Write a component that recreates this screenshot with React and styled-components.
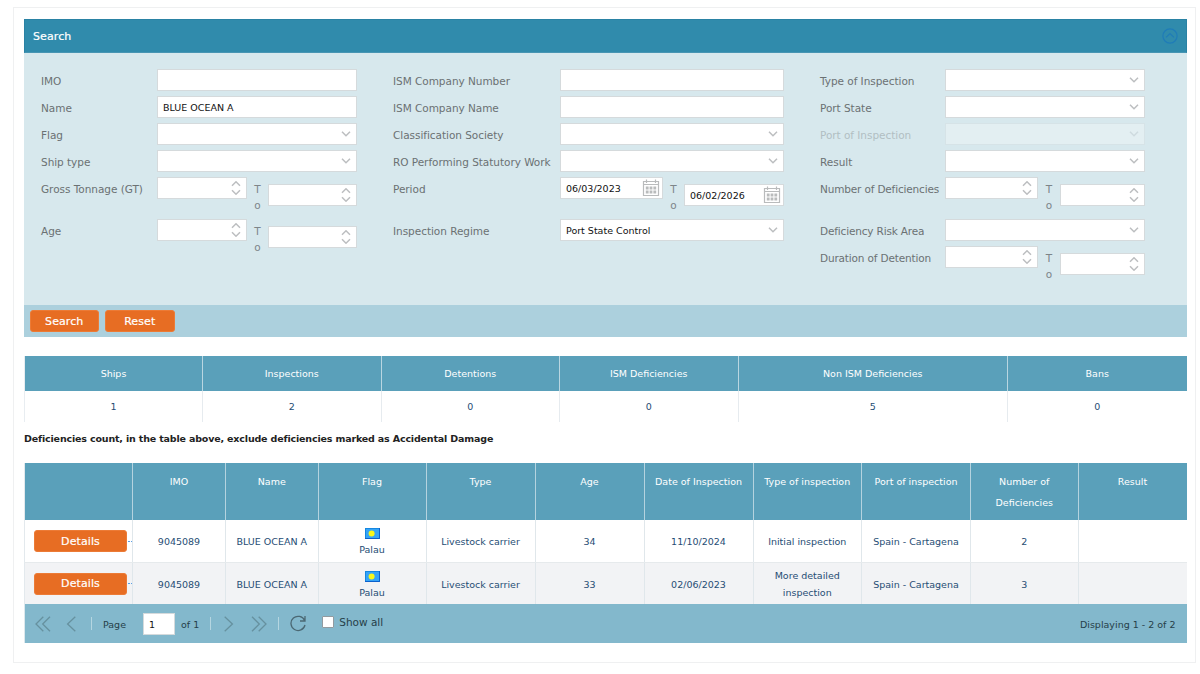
import React from 'react'
import styled, { createGlobalStyle } from 'styled-components'

const filters = [
    {
        labelWidth: 116,
        fieldWidth: 200,
        rows: [
            { label: 'IMO' },
            { label: 'Name', value: 'BLUE OCEAN A' },
            { label: 'Flag', type: 'select' },
            { label: 'Ship type', type: 'select' },
            { label: 'Gross Tonnage (GT)', type: 'range', from: 90, to: 89 },
            { label: 'Age', type: 'range', from: 90, to: 89 },
        ],
    },
    {
        labelWidth: 167,
        fieldWidth: 224,
        rows: [
            { label: 'ISM Company Number' },
            { label: 'ISM Company Name' },
            { label: 'Classification Society', type: 'select' },
            { label: 'RO Performing Statutory Work', type: 'select' },
            { label: 'Period', type: 'dates', from: 103, to: 100, values: ['06/03/2023', '06/02/2026'] },
            { label: 'Inspection Regime', type: 'select', value: 'Port State Control' },
        ],
    },
    {
        labelWidth: 125,
        fieldWidth: 200,
        rows: [
            { label: 'Type of Inspection', type: 'select' },
            { label: 'Port State', type: 'select' },
            { label: 'Port of Inspection', type: 'select', disabled: true },
            { label: 'Result', type: 'select' },
            { label: 'Number of Deficiencies', type: 'range', from: 93, to: 85, tight: true },
            { label: 'Deficiency Risk Area', type: 'select', tight: true },
            { label: 'Duration of Detention', type: 'range', from: 93, to: 85, tight: true },
        ],
    },
]

const totals = [
    ['Ships', 1],
    ['Inspections', 2],
    ['Detentions', 0],
    ['ISM Deficiencies', 0],
    ['Non ISM Deficiencies', 5],
    ['Bans', 0],
]

const headings = ['', 'IMO', 'Name', 'Flag', 'Type', 'Age', 'Date of Inspection', 'Type of inspection', 'Port of inspection', 'Number of Deficiencies', 'Result']

const inspections = [
    { imo: '9045089', name: 'BLUE OCEAN A', flag: 'Palau', type: 'Livestock carrier', age: 34, date: '11/10/2024', kind: 'Initial inspection', port: 'Spain - Cartagena', count: 2 },
    { imo: '9045089', name: 'BLUE OCEAN A', flag: 'Palau', type: 'Livestock carrier', age: 33, date: '02/06/2023', kind: 'More detailed inspection', port: 'Spain - Cartagena', count: 3 },
]

const Chevron = () => (
    <svg width="10" height="6" viewBox="0 0 10 6" fill="none" stroke="#bcbec0" strokeWidth="1.5">
        <path d="M1 .8 5 4.7 9 .8" />
    </svg>
)

const Spinner = () => (
    <svg width="10" height="14" viewBox="0 0 10 14" fill="none" stroke="#bcbec0" strokeWidth="1.5">
        <path d="M1 4.7 5 .8 9 4.7M1 9.3 5 13.2 9 9.3" />
    </svg>
)

const Calendar = () => (
    <svg width="18" height="18" viewBox="0 0 18 18" fill="none" stroke="#b9bbbc">
        <path d="M1.5 2.5H16.5V16.5H1.5ZM1.5 5.5H16.5M4.5 .5V4M13.5 .5V4" strokeWidth="1.2" />
        <path d="M3.8 9H14.2M3.8 13H14.2" strokeWidth="2.8" strokeDasharray="2.8 1" />
    </svg>
)

const Pager = ({ double, flip }) => (
    <Arrow $flip={flip} width="16" height="16" viewBox="0 0 16 16" fill="none" stroke="#66919f" strokeWidth="1.3">
        {double ? <path d="M8.3 .8 1 8 8.3 15.2M15 .8 7.7 8 15 15.2" /> : <path d="M12.3 .8 4.6 8 12.3 15.2" />}
    </Arrow>
)

const PalauFlag = () => (
    <svg width="15" height="11" viewBox="0 0 15 11">
        <path d="M0 0H15V11H0Z" fill="#1687e0" />
        <path d="M1 1H14V10H1Z" fill="#35a4f7" />
        <path d="M14.5 0V10.5H0" fill="none" stroke="#0c61cc" />
        <circle cx="6.6" cy="5.4" r="3" fill="#f8f71b" />
    </svg>
)

const Control = ({ row }) => {
    if (row.from) {
        const Icon = row.type === 'range' ? Spinner : Calendar
        const [first, last] = row.values || []
        return (
            <Pair>
                <Field $width={row.from} $icon={row.type}>{first}<Icon /></Field>
                <To>To</To>
                <Field $width={row.to} $icon={row.type} $lower>{last}<Icon /></Field>
            </Pair>
        )
    }
    return (
        <Field $disabled={row.disabled}>
            {row.value}
            {row.type === 'select' && <Chevron />}
        </Field>
    )
}

const App = () => {
    return (
        <>
            <GlobalStyle />
            <Page>
                <SearchHeader>
                    Search
                    <svg width="16" height="16" viewBox="0 0 16 16" fill="none" stroke="#1f7cb8" strokeWidth="1.2">
                        <circle cx="8" cy="8" r="7.1" />
                        <path d="M4 9.4 8 5.6 12 9.4" />
                    </svg>
                </SearchHeader>
                <Form>
                    {filters.map((group, i) => (
                        <Group key={i} $label={group.labelWidth} $field={group.fieldWidth}>
                            {group.rows.map((row) => (
                                <React.Fragment key={row.label}>
                                    <Label $disabled={row.disabled} $tight={row.tight}>{row.label}</Label>
                                    <Cell $tall={row.from}>
                                        <Control row={row} />
                                    </Cell>
                                </React.Fragment>
                            ))}
                        </Group>
                    ))}
                </Form>
                <Actions>
                    <Button>Search</Button>
                    <Button>Reset</Button>
                </Actions>
                <Totals>
                    {totals.map(([name]) => <TotalHead key={name}>{name}</TotalHead>)}
                    {totals.map(([name, value]) => <TotalValue key={name}>{value}</TotalValue>)}
                </Totals>
                <Note>Deficiencies count, in the table above, exclude deficiencies marked as Accidental Damage</Note>
                <Results>
                    {headings.map((text, i) => <Head key={i}><span>{text}</span></Head>)}
                </Results>
                {inspections.map((ship, i) => (
                    <ResultRow key={i} $odd={i % 2 === 1}>
                        <DetailsCell>
                            <Button $wide>Details</Button>
                            <Dots />
                        </DetailsCell>
                        <Data>{ship.imo}</Data>
                        <Data>{ship.name}</Data>
                        <FlagData><PalauFlag />{ship.flag}</FlagData>
                        <Data>{ship.type}</Data>
                        <Data>{ship.age}</Data>
                        <Data>{ship.date}</Data>
                        <Data>{ship.kind}</Data>
                        <Data>{ship.port}</Data>
                        <Data>{ship.count}</Data>
                        <Data />
                    </ResultRow>
                ))}
                <Footer>
                    <Pager double />
                    <Slot $left={12}><Pager /></Slot>
                    <Separator $left={12} />
                    <PageText $left={11}>Page</PageText>
                    <PageInput>1</PageInput>
                    <PageText $left={6}>of 1</PageText>
                    <Separator $left={11} />
                    <Slot $left={10}><Pager flip /></Slot>
                    <Slot $left={14}><Pager double flip /></Slot>
                    <Separator $left={11} />
                    <Slot $left={11}>
                        <svg width="16" height="17" viewBox="0 0 16 17" fill="none" stroke="#4b6873" strokeWidth="1.3">
                            <path d="M15 1V6H10M14.6 5.6A7.1 7.1 0 1 0 15 10" />
                        </svg>
                    </Slot>
                    <ShowAll><Checkbox />Show all</ShowAll>
                    <Displaying>Displaying 1 - 2 of 2</Displaying>
                </Footer>
            </Page>
        </>
    )
}

const GlobalStyle = createGlobalStyle`
    * {
        box-sizing: border-box;
    }
    body {
        margin: 0;
        background: #fff;
        font-family: "DejaVu Sans", Verdana, sans-serif;
        font-size: 9.5px;
    }
    svg {
        display: block;
        flex: none;
    }
`;

const Page = styled.div`
    width: 1183px;
    height: 656px;
    margin: 7px 0 0 13px;
    padding: 11px 8.5px 0 10px;
    border: 1px solid #eff0f1;
`;

const SearchHeader = styled.div`
    display: flex;
    align-items: center;
    justify-content: space-between;
    height: 34px;
    padding: 0 8px;
    background: #308bac;
    border: 1px solid #2a82a4;
    border-bottom-color: #4795b3;
    color: #fff;
    font-size: 11px;
    letter-spacing: 0.1px;
    -webkit-text-stroke: 0.2px #fff;
`;

const Form = styled.div`
    display: flex;
    height: 252px;
    padding: 16px 0 0 17px;
    gap: 36px;
    background: #d7e8ed;
`;

const Group = styled.div`
    display: grid;
    grid-template-columns: ${props => props.$label}px ${props => props.$field}px;
    align-content: start;
`;

const Label = styled.div`
    padding-top: 4px;
    color: #6b7173;
    font-size: 10.5px;
    letter-spacing: ${props => props.$tight ? -0.16 : -0.04}px;
    line-height: 17px;
    white-space: nowrap;
    opacity: ${props => props.$disabled ? 0.35 : 1};
`;

const Cell = styled.div`
    height: ${props => props.$tall ? 42 : 27}px;
`;

const Pair = styled.div`
    display: flex;
    justify-content: space-between;
`;

const Field = styled.div`
    display: flex;
    align-items: center;
    justify-content: space-between;
    width: ${props => props.$width ? props.$width + 'px' : '100%'};
    height: 22px;
    margin-top: ${props => props.$lower ? 7 : 0}px;
    padding: 0 ${props => props.$icon === 'dates' ? 2 : 5}px 0 5px;
    border: 1px solid #d5dadc;
    background: #fff;
    color: #111;
    opacity: ${props => props.$disabled ? 0.3 : 1};
    white-space: nowrap;

    svg {
        margin-left: auto;
    }
`;

const To = styled.div`
    width: 8px;
    padding-top: 4px;
    color: #7d8589;
    font-size: 10.5px;
    line-height: 16.4px;
    text-align: center;
    word-break: break-all;
`;

const Actions = styled.div`
    display: flex;
    align-items: center;
    gap: 6px;
    height: 32px;
    padding-left: 5.5px;
    background: #acd0dd;
`;

const Button = styled.button`
    width: ${props => props.$wide ? 93 : 69.5}px;
    height: 22px;
    padding: 0;
    border: 1px solid #ec7b36;
    border-radius: 3px;
    background: #e76d23;
    color: #fff;
    font-family: inherit;
    font-size: 11px;
    letter-spacing: 0.1px;
    -webkit-text-stroke: 0.2px #fff;
`;

const Totals = styled.div`
    display: grid;
    grid-template-columns: 178px 178.5px 178.5px 178.5px 269.5px 1fr;
    grid-template-rows: 35px 31px;
    margin-top: 18.5px;
    border-left: 1px solid #e8edf1;
`;

const TotalHead = styled.div`
    display: flex;
    align-items: center;
    justify-content: center;
    background: #5aa0ba;
    color: #fff;
    border: solid #b9d6e1;
    border-width: 0 1px 0 0;

    &:nth-child(6) {
        border-right: 0;
    }
`;

const TotalValue = styled.div`
    display: flex;
    align-items: center;
    justify-content: center;
    color: #264d74;
    border-right: 1px solid #e6ebef;

    &:last-child {
        border-right: 0;
    }
`;

const Note = styled.div`
    margin-top: 10px;
    height: 31.5px;
    color: #222;
    font-weight: bold;
    letter-spacing: -0.165px;
    line-height: 14px;
    white-space: nowrap;
`;

const Results = styled.div`
    display: grid;
    grid-template-columns: 108px 93px 92.5px 108px 109px 109px 109px 108.5px 109px 107.5px 1fr;
    border-left: 1px solid #e3e9ed;
    height: 56.5px;
`;

const Head = styled.div`
    background: #5aa0ba;
    color: #fff;
    line-height: 21px;
    padding: 7.5px 14px 0;
    text-align: center;
    border-right: 1px solid #b4d3df;
    display: flex;
    justify-content: center;

    span {
        flex: none;
        max-width: 92px;
    }

    &:last-child {
        border-right: 0;
    }
`;

const ResultRow = styled(Results)`
    height: ${props => props.$odd ? 41.5 : 43}px;
    background: ${props => props.$odd ? '#f2f3f5' : '#fff'};
    border-bottom: ${props => props.$odd ? 0 : 1}px solid #e6eaec;
`;

const Data = styled.div`
    display: flex;
    align-items: center;
    justify-content: center;
    padding: 3px 3px 0;
    color: #264d74;
    line-height: 16.5px;
    text-align: center;
    border-right: 1px solid #e0e7eb;

    &:last-child {
        border-right: 0;
    }
`;

const FlagData = styled(Data)`
    flex-direction: column;
    gap: 3px;
    padding-top: 6px;
`;

const DetailsCell = styled(Data)`
    justify-content: flex-start;
    padding: 1px 0 0 9px;
`;

const Dots = styled.span`
    width: 4px;
    margin-left: 1px;
    border-top: 1px dotted #5b9fe6;
`;

const Footer = styled.div`
    display: flex;
    align-items: center;
    height: 39px;
    padding: 0 11px 0 10px;
    border-left: 1px solid #dce8ed;
    background: #83b8cc;
    color: #264049;
    white-space: nowrap;
`;

const Arrow = styled.svg`
    transform: ${props => props.$flip ? 'scaleX(-1)' : 'none'};
`;

const Slot = styled.div`
    margin-left: ${props => props.$left}px;
`;

const PageText = styled(Slot)`
    padding-top: 2px;
`;

const Separator = styled.div`
    width: 1px;
    height: 13px;
    margin-left: ${props => props.$left}px;
    background: #b5d6e1;
`;

const PageInput = styled.div`
    width: 32px;
    height: 22px;
    margin-left: 17px;
    padding-left: 5px;
    border: 1px solid #d5dadc;
    background: #fff;
    line-height: 21px;
    color: #111;
`;

const ShowAll = styled.div`
    display: flex;
    align-items: center;
    gap: 5px;
    margin: 0 0 4px 16px;
    font-size: 10.5px;
`;

const Checkbox = styled.span`
    width: 12px;
    height: 12px;
    border: 1px solid #929ba0;
    border-radius: 1px;
    background: #fff;
`;

const Displaying = styled.div`
    margin-left: auto;
    padding-top: 2px;
`;

export default App
